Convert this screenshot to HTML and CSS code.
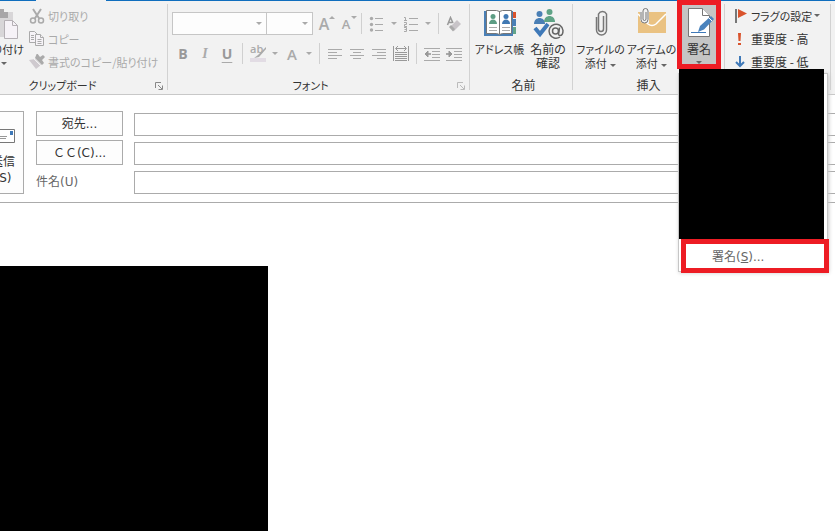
FILE: index.html
```html
<!DOCTYPE html>
<html lang="ja">
<head>
<meta charset="utf-8">
<title>メッセージの作成</title>
<link rel="stylesheet" href="styles.css">
</head>
<body>
<header class="ribbon">
  <section class="group clipboard">
    <div class="tools">
      <button class="big paste" type="button">
        <svg width="40" height="32" viewBox="0 0 40 32"><path d="M9 4h21v25H9z" fill="#d8d6d8"/><path d="M14 1h7v3h4v6H12V4h2z" fill="#a8a6a8"/><path d="M21.500 12.500h8l5 5v13h-13z" fill="#f6f2f7" stroke="#b5b0b5"/><path d="M29.500 12.500v5h5" fill="none" stroke="#b5b0b5"/></svg>
        <span>貼り付け</span><i class="arrow"></i>
      </button>
      <div class="rows disabled">
        <button class="row" type="button" disabled><svg width="16" height="16" viewBox="0 0 16 16" fill="none" stroke="#aaa"><path d="M4 1l6.500 10M12 1L5.500 11" stroke-width="2"/><circle cx="4" cy="12.500" r="2.500" stroke-width="1.500"/><circle cx="12" cy="12.500" r="2.500" stroke-width="1.500"/></svg>切り取り</button>
        <button class="row" type="button" disabled><svg width="16" height="16" viewBox="0 0 16 16" fill="#f6f3f7" stroke="#aaa"><path d="M.5.500h5l3 3v8h-8z"/><path d="M2 4.500h3M2 6.500h3M2 8.500h3"/><path d="M6.500 3.500h5l3 3v8h-8z"/><path d="M11.500 3.500v3h3M8.500 8.500h4M8.500 10.500h4M8.500 12.500h4"/></svg>コピー</button>
        <button class="row" type="button" disabled><svg width="16" height="16" viewBox="0 0 16 16"><path d="M0 6l6-1 6 6-5 4z" fill="#cfcacf"/><path d="M6 4l7 7 2-2-2-3 3-3-2-2-3 2-3-4z" fill="#aaa"/><path d="M5 5l7 7" stroke="#f2f2f2"/></svg>書式のコピー/貼り付け</button>
      </div>
    </div>
    <h2>クリップボード</h2>
    <svg class="launcher" width="8" height="8" viewBox="0 0 8 8" fill="none" stroke="#888"><path d="M.5 6V.5H6M3 3l4 4M7.500 3.500v4h-4"/></svg>
  </section>

  <section class="group font">
    <div class="toolbar">
      <button class="combo family" type="button" aria-label="フォント"><i class="arrow"></i></button>
      <button class="combo size" type="button" aria-label="サイズ"><i class="arrow"></i></button>
      <button class="tool grow" type="button" aria-label="拡大">A<i class="up"></i></button>
      <button class="tool shrink" type="button" aria-label="縮小">A<i class="arrow"></i></button>
      <span class="sep"></span>
      <button class="tool" type="button" aria-label="箇条書き"><svg width="16" height="16" viewBox="0 0 16 16" stroke="#aaa" fill="#aaa"><g stroke="none"><circle cx="2.500" cy="2.500" r="1.700"/><circle cx="2.500" cy="8.500" r="1.700"/><circle cx="2.500" cy="14" r="1.700"/></g><path d="M6 2.500h8M6 8.500h8M6 14.500h8"/></svg></button>
      <button class="drop" type="button" aria-label="箇条書きの種類"><i class="arrow"></i></button>
      <button class="tool" type="button" aria-label="段落番号"><svg width="16" height="16" viewBox="0 0 16 16" stroke="#aaa" fill="none"><path d="M1 1.500h1.500V4M1 4.500h3M1 6.500h2.500v2h-2v2H4M1 11.500h2.500v4H1M1.500 13.500h2M6 2.500h9M6 8.500h9M6 14.500h9"/></svg></button>
      <button class="drop" type="button" aria-label="番号の種類"><i class="arrow"></i></button>
      <span class="sep"></span>
      <button class="tool" type="button" aria-label="書式のクリア"><svg width="16" height="16" viewBox="0 0 16 16"><path d="M1.500 9L4.500 1.500 7 7M2.500 6.500h4" fill="none" stroke="#999" stroke-width="1.500"/><path d="M11 4l4 4-7 7-4-4z" fill="#c8c4c8"/><path d="M3 11l2-2 4 4-2 2.500z" fill="#aaa"/></svg></button>
    </div>
    <div class="toolbar second">
      <button class="tool" type="button"><b>B</b></button>
      <button class="tool italic" type="button">I</button>
      <button class="tool under" type="button"><b>U</b></button>
      <span class="sep"></span>
      <button class="tool mark" type="button" aria-label="蛍光ペン"><span>ab</span><svg width="16" height="16" viewBox="0 0 16 16"><path d="M0 12h16v4H0z" fill="#e2dce4"/><path d="M16 1L8 9l-4 3 5-1 7-8z" fill="#aaa"/></svg></button>
      <button class="drop" type="button" aria-label="蛍光ペンの色"><i class="arrow"></i></button>
      <button class="tool color" type="button">A</button>
      <button class="drop" type="button" aria-label="フォントの色"><i class="arrow"></i></button>
      <span class="sep"></span>
      <button class="tool" type="button" aria-label="左揃え"><svg width="16" height="16" viewBox="0 0 16 16" stroke="#aaa"><path d="M1 3.500h14M1 6.500h9M1 9.500h14M1 12.500h9"/></svg></button>
      <button class="tool" type="button" aria-label="中央揃え"><svg width="16" height="16" viewBox="0 0 16 16" stroke="#aaa"><path d="M1 3.500h14M4 6.500h8M1 9.500h14M4 12.500h8"/></svg></button>
      <button class="tool" type="button" aria-label="右揃え"><svg width="16" height="16" viewBox="0 0 16 16" stroke="#aaa"><path d="M1 3.500h14M6 6.500h9M1 9.500h14M6 12.500h9"/></svg></button>
      <button class="tool" type="button" aria-label="均等割り付け"><svg width="16" height="16" viewBox="0 0 16 16" fill="none" stroke="#999"><path d="M.5 0v15M15.500 0v15M3 2.500h10M5 0L2.500 2.500 5 5M11 0l2.500 2.500L11 5M2 6.500h12M2 8.500h12M2 10.500h12M2 12.500h12M2 14.500h12"/></svg></button>
      <span class="sep"></span>
      <button class="tool" type="button" aria-label="インデント解除"><svg width="16" height="16" viewBox="0 0 16 16" stroke="#aaa"><path d="M0 2.500h16M8 5.500h8M8 8.500h8M8 11.500h8M0 14.500h16"/><path d="M7 8H2" stroke-width="2"/><path d="M4 5L1 8l3 3z" fill="#999" stroke="#999"/></svg></button>
      <button class="tool" type="button" aria-label="インデント"><svg width="16" height="16" viewBox="0 0 16 16" stroke="#aaa"><path d="M0 2.500h16M8 5.500h8M8 8.500h8M8 11.500h8M0 14.500h16"/><path d="M0 8h5" stroke-width="2"/><path d="M3 5l3 3-3 3z" fill="#999" stroke="#999"/></svg></button>
    </div>
    <h2>フォント</h2>
    <svg class="launcher" width="8" height="8" viewBox="0 0 8 8" fill="none" stroke="#bbb"><path d="M.5 6V.5H6M3 3l4 4M7.500 3.500v4h-4"/></svg>
  </section>

  <section class="group names">
    <div class="tools">
      <button class="big" type="button">
        <svg width="32" height="32" viewBox="0 0 32 32"><path d="M0 3h29v25H0z" fill="#4a7fb5"/><path d="M29 4h3v6h-3z" fill="#d9532c"/><path d="M29 11h3v7h-3z" fill="#4a7fb5"/><path d="M29 19h3v7h-3z" fill="#62a489"/><path d="M2.500 2.500h10l3 1 3-1h9v23h-9l-3 1-3-1h-10z" fill="#fff" stroke="#777"/><path d="M15.500 3v23" stroke="#777"/><g fill="#5d9d84"><circle cx="9" cy="8.500" r="2.500"/><path d="M5 16c0-6 8-6 8 0z"/></g><g fill="#4079b3"><circle cx="22" cy="8.500" r="2.500"/><path d="M18 16c0-6 8-6 8 0z"/></g><path d="M5 19.500h8M5 22.500h8M18 19.500h8M18 22.500h8" stroke="#aaa"/></svg>
        <span>アドレス帳</span>
      </button>
      <button class="big" type="button">
        <svg width="32" height="32" viewBox="0 0 32 32"><g fill="#4a7fb5"><circle cx="7.500" cy="6" r="3"/><path d="M2 16c0-8 11-8 11 0z"/></g><g fill="#5fa386"><circle cx="17.500" cy="4" r="3"/><path d="M12 14c0-8 11-8 11 0z"/></g><path d="M3 20l5 6 8-10" fill="none" stroke="#3f79b8" stroke-width="4"/><circle cx="24" cy="23" r="8.500" fill="#f2f2f2"/><path d="M28 29a7 7 0 1 1 3-6.500c0 3-1 5-3 5s-1.500-2-1-4l.5-4" fill="none" stroke="#666" stroke-width="1.500"/><circle cx="23.500" cy="23" r="3" fill="none" stroke="#666" stroke-width="1.500"/></svg>
        <span class="wide">名前の<br>確認</span>
      </button>
    </div>
    <h2 class="wide">名前</h2>
  </section>

  <section class="group insert">
    <div class="tools">
      <button class="big" type="button">
        <svg width="32" height="32" viewBox="0 0 32 32" fill="none" stroke="#777" stroke-width="1.500"><path d="M18.500 8v13a2.500 2.500 0 0 1-5 0V6a4.500 4.500 0 0 1 8 0v16a5 5 0 0 1-10 0V9"/></svg>
        <span>ファイルの<br>添付 <i class="arrow"></i></span>
      </button>
      <button class="big" type="button">
        <svg width="32" height="32" viewBox="0 0 32 32" fill="none"><path d="M2 4h28v21H2z" fill="#eac282"/><path d="M2 6l10 10q4 3 8 0L30 6" stroke="#fff" stroke-width="1.500"/><path d="M4 0h9v15H6L4 12z" fill="#f2f2f2"/><path d="M10 4v7a1.500 1.500 0 0 1-3 0V3a2.500 2.500 0 0 1 5 0v8.500a3.500 3.500 0 0 1-7 0V4" stroke="#777"/></svg>
        <span>アイテムの<br>添付 <i class="arrow"></i></span>
      </button>
      <div class="signature">
        <button class="big pressed" type="button">
          <svg width="32" height="32" viewBox="0 0 32 32"><path d="M5.500.5h14l7 7v21h-21z" fill="#fff" stroke="#777"/><path d="M19.500.5v7h7" fill="#fff" stroke="#777"/><path d="M8 24.500h15" stroke="#3f79b8"/><path d="M15 24l2-6L28 8l3 3-10 10.500z" fill="#4a83bd"/><path d="M26 10l3 3" stroke="#fff"/></svg>
          <span class="wide">署名</span><i class="arrow"></i>
        </button>
        <div class="menu">
          <div class="saved"></div>
          <button class="item" type="button">署名(<u>S</u>)...</button>
        </div>
      </div>
    </div>
    <h2 class="wide">挿入</h2>
  </section>

  <section class="group tags">
    <div class="rows">
      <button class="row" type="button"><svg width="16" height="16" viewBox="0 0 16 16"><path d="M0 1h2v14H0z" fill="#777"/><path d="M3 1l9 4.500L3 10z" fill="#d9532c"/></svg>フラグの設定 <i class="arrow"></i></button>
      <button class="row wide" type="button"><svg width="16" height="16" viewBox="0 0 16 16" fill="#d9532c"><path d="M3 2h3l-.5 8h-2zM3 12h3v2H3z"/></svg>重要度 - 高</button>
      <button class="row wide" type="button"><svg width="16" height="16" viewBox="0 0 16 16" fill="none" stroke="#3f79b8" stroke-width="2"><path d="M5 2v10M1 8l4 4 4-4"/></svg>重要度 - 低</button>
    </div>
  </section>
</header>

<form class="compose">
  <button class="send" type="button">
    <svg width="32" height="14" viewBox="0 0 32 14"><path d="M.5.500h31v13H.5z" fill="#fff" stroke="#777"/><path d="M27 2h3v4h-3z" fill="#3f79b8"/><path d="M14 7.500h10M14 9.500h9" stroke="#999"/></svg>
    <span>送信<br>(S)</span>
  </button>
  <div class="fields">
    <button class="address" type="button" id="to">宛先...</button><input type="text" aria-labelledby="to">
    <button class="address" type="button" id="cc">ＣＣ(C)...</button><input type="text" aria-labelledby="cc">
    <label for="subject">件名(U)</label><input type="text" id="subject">
  </div>
</form>

<main class="message">
  <div class="content"></div>
</main>
</body>
</html>
```

FILE: styles.css
```css
* { box-sizing: border-box; }

body {
  margin: 0;
  min-height: 100vh;
  display: flex;
  flex-direction: column;
  overflow: hidden;
  background: #fff;
  color: #333;
  font: 12px/14px "DejaVu Sans", "Noto Sans CJK JP", sans-serif;
}

button {
  margin: 0;
  padding: 0;
  border: 0;
  background: none;
  color: inherit;
  font: inherit;
  font-feature-settings: inherit;
  white-space: nowrap;
}

svg { display: block; flex: none; }

.arrow, .up {
  display: inline-block;
  flex: none;
  border: 3px solid transparent;
  border-top-color: #666;
  border-bottom-width: 0;
}

.up {
  border-top-width: 0;
  border-bottom: 3px solid #aaa;
}

/* Ribbon */
.ribbon {
  display: flex;
  padding: 4px 0;
  background: linear-gradient(90deg, #106ebe 36px, #f2f2f2 36px 106px, #106ebe 106px) 0 0 / 100% 1px no-repeat #f2f2f2;
  border-bottom: 1px solid #c8c8c8;
  font-family: "Noto Sans CJK JP", sans-serif;
  font-size: 11px;
  font-feature-settings: "palt";
}

.group {
  position: relative;
  display: flex;
  flex-direction: column;
  flex: none;
  height: 86px;
  border-right: 1px solid #d2d2d2;
}

.group h2 {
  margin: auto 0 -2px;
  font-size: 11px;
  font-weight: normal;
  line-height: 14px;
  text-align: center;
}

.ribbon .wide { font-size: 12px; }

.launcher { position: absolute; right: 4px; bottom: 0; }

.tools { display: flex; }

.big {
  display: flex;
  flex-direction: column;
  align-items: center;
  padding-top: 4px;
}

.big svg { margin-bottom: 2px; }
.big .arrow { margin-left: 1px; vertical-align: middle; }

.rows { display: flex; flex-direction: column; }

.row {
  display: flex;
  align-items: center;
  gap: 3px;
  height: 23px;
}

.disabled { color: #aaa; }

.clipboard { width: 208px; margin-left: -40px; }
.clipboard .tools { gap: 6px; padding-left: 23px; }
.clipboard h2 { padding-right: 2px; }
.paste { width: 40px; }
.paste .arrow { margin-top: 6px; }

.font { width: 302px; padding: 8px 0 0 4px; color: #aaa; }
.font h2 { padding-right: 20px; color: #333; }
.font .arrow { border-top-color: #aaa; }

.toolbar { display: flex; align-items: center; height: 23px; }
.second { margin-top: 7px; }

.combo {
  display: flex;
  align-items: center;
  justify-content: flex-end;
  height: 23px;
  padding-right: 4px;
  border: 1px solid #c6c6c6;
  background: #fdfdfd;
}

.family { width: 95px; }
.size { width: 47px; margin-left: -1px; }

.tool {
  position: relative;
  display: flex;
  align-items: center;
  justify-content: center;
  width: 22px;
  height: 21px;
  font: 14px/20px "Open Sans", "Noto Sans", sans-serif;
}

.tool b { color: #999; }
.drop { display: flex; justify-content: center; width: 12px; }
.sep { width: 1px; height: 21px; margin: 0 4px; background: #d0d0d0; }
.italic { font: italic bold 14px/20px "Liberation Serif", serif; }
.under { text-decoration: underline; text-underline-offset: 3px; }
.grow { font-size: 16px; font-weight: 600; }
.shrink { font-size: 13px; font-weight: 600; }
.color { font-size: 15px; font-weight: 600; }
.grow i, .shrink i { position: absolute; top: 3px; right: 0; }
.mark span { position: absolute; left: 3px; top: 0; font-size: 11px; font-weight: 600; line-height: 12px; }

.names { width: 103px; padding-left: 5px; }
.names .big { width: 49px; }

.insert { width: 152px; padding-left: 2px; }
.insert .tools > .big { width: 51px; }
.insert h2 { padding-right: 2px; }

.signature {
  position: relative;
  width: 44px;
  height: 69px;
  margin: -4px 0 -8px;
  border: 5px solid #ed1c24;
}

.pressed {
  width: 100%;
  height: 100%;
  padding-top: 3px;
  background: #c5c5c5;
}

.pressed .arrow { margin: 5px 0 0; }

.menu {
  position: absolute;
  z-index: 1;
  left: -4px;
  top: 68px;
  width: 150px;
  height: 199px;
  border: 1px solid #c6c6c6;
  background: #fff;
  box-shadow: 1px 1px 4px #ccc;
  font-family: "DejaVu Sans", "Noto Sans CJK JP", sans-serif;
  font-size: 12px;
  font-feature-settings: normal;
}

.saved {
  width: 145px;
  height: 170px;
  margin-top: -5px;
  background: #000;
}

.item {
  display: block;
  width: 148px;
  height: 34px;
  margin-left: 2px;
  padding: 2px 0 0 26px;
  border: 5px solid #ed1c24;
  background: #fff;
  color: #666;
  text-align: left;
}

.tags { width: 106px; padding-left: 10px; }
.tags .row { gap: 0; }
.tags .arrow { margin-left: 2px; }

/* Message header */
.compose {
  display: flex;
  gap: 12px;
  padding: 16px 0 8px;
  border-bottom: 1px solid #ababab;
}

.send {
  display: flex;
  flex-direction: column;
  align-items: center;
  justify-content: space-between;
  width: 60px;
  margin-left: -36px;
  padding: 17px 8px 7px 0;
  border: 1px solid #ababab;
  background: #fdfdfd;
}

.send svg { align-self: flex-end; }
.send span { line-height: 16px; padding-left: 26px; }

.fields {
  flex: 1;
  display: grid;
  grid-template-columns: 87px 1fr;
  grid-auto-rows: 25px;
  gap: 4px 11px;
  margin-right: -2px;
}

.address { padding-top: 1px; border: 1px solid #ababab; background: #fdfdfd; }

.fields input {
  width: 100%;
  height: 23px;
  align-self: end;
  border: 1px solid #ababab;
  font: inherit;
}

.fields label { align-self: center; color: #666; }

/* Message body */
.message { flex: 1; display: flex; padding-top: 63px; }
.content { width: 268px; background: #000; }
```
